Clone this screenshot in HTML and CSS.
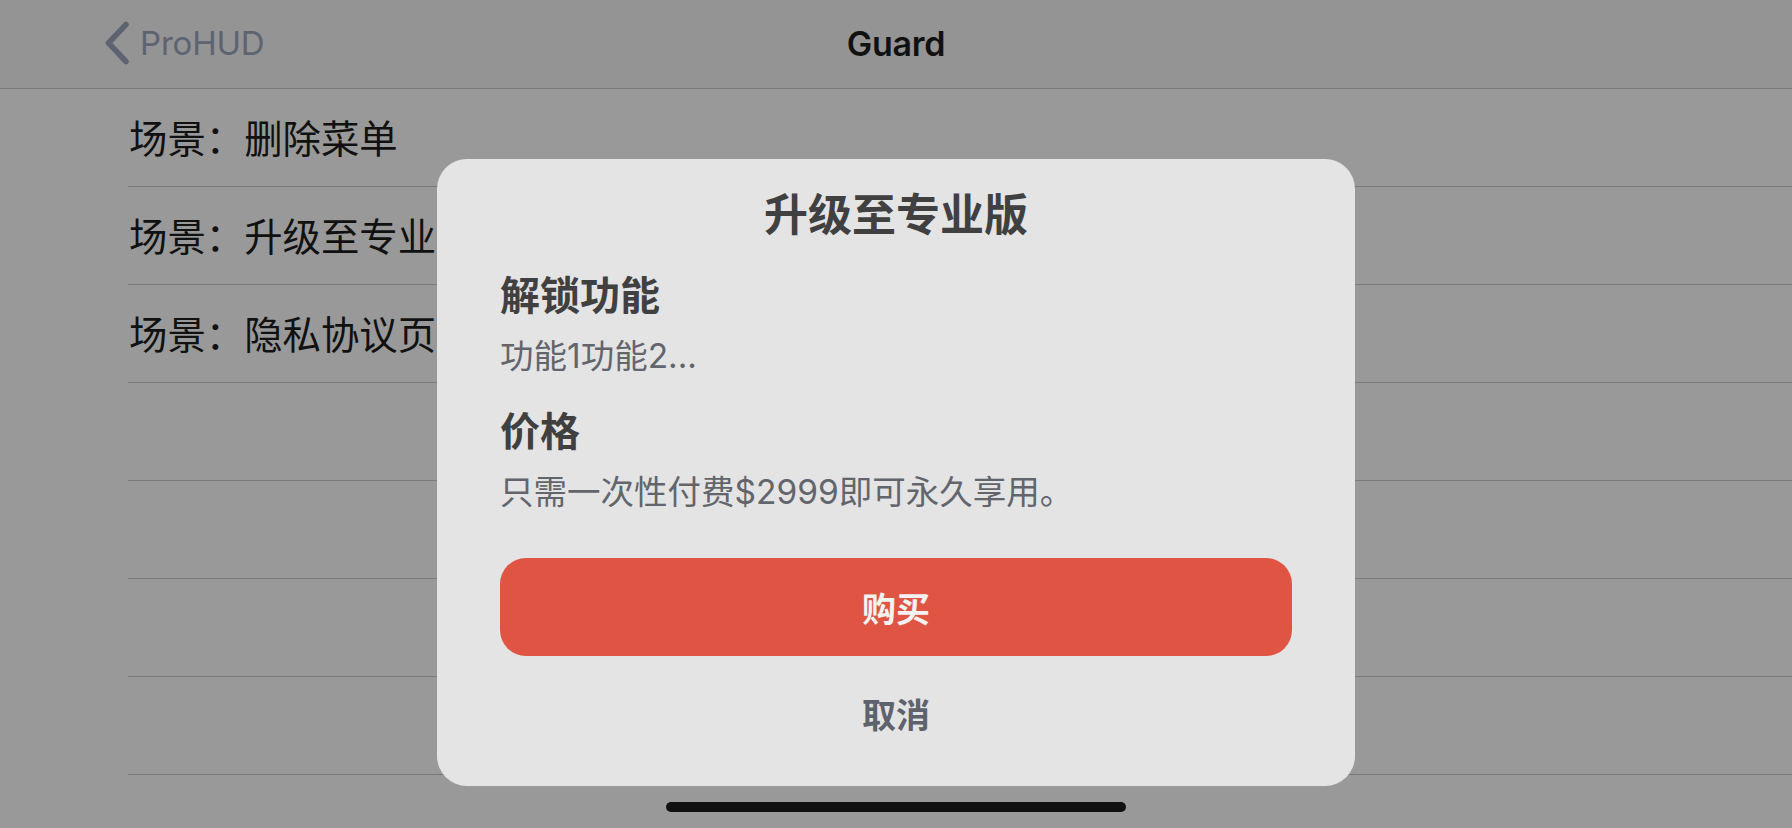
FILE: index.html
```html
<!DOCTYPE html>
<html lang="zh">
<head>
<meta charset="utf-8">
<title>Guard</title>
<link rel="stylesheet" href="styles.css">
</head>
<body>
<div class="screen">
  <header class="nav">
    <div class="nav-left">
      <svg class="chev" width="26" height="44" viewBox="0 0 26 44"><polyline points="22,3.5 4.5,22 22,40.5" fill="none" stroke="#5e6371" stroke-width="5.5" stroke-linecap="round" stroke-linejoin="round"/></svg>
      <span class="back-text">ProHUD</span>
    </div>
    <div class="nav-title">Guard</div>
    <div class="nav-right"></div>
  </header>
  <ul class="list">
    <li class="row">场景：删除菜单</li>
    <li class="row">场景：升级至专业版</li>
    <li class="row">场景：隐私协议页面</li>
    <li class="row"></li>
    <li class="row"></li>
    <li class="row"></li>
    <li class="row"></li>
  </ul>

  <div class="overlay">
    <div class="modal">
      <div class="modal-title">升级至专业版</div>
      <div class="section-title first">解锁功能</div>
      <div class="section-body">功能1功能2...</div>
      <div class="section-title">价格</div>
      <div class="section-body">只需一次性付费$2999即可永久享用。</div>
      <button class="buy">购买</button>
      <button class="cancel">取消</button>
    </div>
  </div>
  <div class="home-indicator"></div>
</div>
</body>
</html>
```
FILE: styles.css
```css
* { box-sizing: border-box; }
html, body {
  margin: 0;
  padding: 0;
  width: 1792px;
  height: 828px;
  overflow: hidden;
  background: #999999;
  font-family: Inter, "Noto Sans CJK SC", sans-serif;
}
.screen {
  position: relative;
  width: 1792px;
  height: 828px;
  background: #999999;
}
.nav {
  height: 89px;
  background: #949494;
  border-bottom: 1px solid #7a7a7a;
  display: grid;
  grid-template-columns: 1fr auto 1fr;
  align-items: center;
}
.nav-left {
  display: flex;
  align-items: center;
  padding-left: 104px;
  gap: 10px;
  color: #5e6371;
  font-size: 33px;
  margin-top: -2px;
}
.chev { display: block; }
.back-text { letter-spacing: -0.2px; margin-top: -1px; }
.nav-title {
  font-size: 34px;
  font-weight: 600;
  color: #111;
  margin-top: -2px;
  letter-spacing: -0.3px;
}
.list {
  list-style: none;
  margin: 0 0 0 128px;
  padding: 0;
}
.row {
  height: 98px;
  border-bottom: 1px solid #7a7a7a;
  display: flex;
  align-items: center;
  padding-left: 1px;
  padding-bottom: 4px;
  font-family: "Noto Sans CJK SC", sans-serif;
  font-size: 38.4px;
  color: #111;
}
.overlay {
  position: absolute;
  left: 0;
  top: 0;
  width: 100%;
  display: flex;
  justify-content: center;
  padding-top: 159px;
}
.modal {
  width: 918px;
  height: 627px;
  background: #e4e4e4;
  border-radius: 30px;
  padding: 30px 63px 0 63px;
  display: flex;
  flex-direction: column;
  font-family: Inter, "Noto Sans CJK SC", sans-serif;
}
.modal-title {
  text-align: center;
  font-size: 44px;
  line-height: 52px;
  font-weight: 700;
  color: #404040;
}
.section-title {
  font-size: 40px;
  line-height: 46px;
  font-weight: 700;
  color: #404040;
  margin-top: 32px;
}
.section-title.first { margin-top: 32px; }
.section-body {
  font-size: 33.5px;
  line-height: 42px;
  color: #62656c;
  margin-top: 16px;
}
.buy {
  margin-top: 45px;
  height: 98px;
  border: none;
  border-radius: 26px;
  background: #e05444;
  color: #f2f2f2;
  font-family: Inter, "Noto Sans CJK SC", sans-serif;
  font-size: 34px;
  font-weight: 700;
  padding: 0;
}
.cancel {
  margin-top: 8px;
  height: 98px;
  border: none;
  background: transparent;
  color: #5d626d;
  font-family: Inter, "Noto Sans CJK SC", sans-serif;
  font-size: 34px;
  font-weight: 700;
  padding: 0;
}
.home-indicator {
  position: absolute;
  left: 666px;
  bottom: 16px;
  width: 460px;
  height: 10px;
  border-radius: 5px;
  background: #111;
}
```
